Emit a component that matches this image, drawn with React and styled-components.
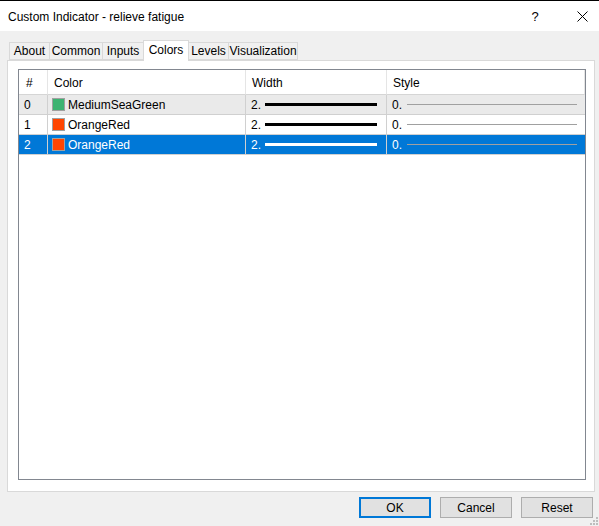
import styled, { createGlobalStyle } from 'styled-components';

const GlobalStyle = createGlobalStyle`
	html, body {
		margin: 0;
		padding: 0;
		background: #f0f0f0;
	}
	body {
		font-family: "Liberation Sans", "Noto Sans", sans-serif;
		font-size: 12px;
		color: #000;
	}
`;

const Window = styled.div`
	width: 599px;
	height: 526px;
	box-sizing: border-box;
	border-top: 1px solid #000;
	display: flex;
	flex-direction: column;
	background: #f0f0f0;
	position: relative;
	overflow: hidden;
`;

const TitleBar = styled.div`
	height: 30px;
	flex-shrink: 0;
	background: #fff;
	display: flex;
	align-items: center;
	padding-left: 8px;
	padding-top: 1px;
	box-sizing: border-box;
`;

const Title = styled.div`
	flex: 1;
	font-size: 12px;
`;

const CaptionButton = styled.div`
	width: ${props => props.w}px;
	height: 30px;
	display: flex;
	align-items: center;
	justify-content: center;
	font-size: 13px;
`;

const Body = styled.div`
	flex: 1;
	display: flex;
	flex-direction: column;
	padding: 9px 4px 9px 7px;
`;

const TabRow = styled.div`
	display: flex;
	align-items: flex-end;
	height: 20px;
	padding-left: 3px;
	position: relative;
	z-index: 1;
`;

const Tab = styled.div`
	box-sizing: border-box;
	height: ${props => props.active ? '21px' : '18px'};
	margin-bottom: ${props => props.active ? '-1px' : '0'};
	width: ${props => props.w}px;
	display: flex;
	align-items: ${props => props.active ? 'flex-start' : 'center'};
	padding-top: ${props => props.active ? '2px' : '0'};
	justify-content: center;
	background: ${props => props.active ? '#fff' : '#f0f0f0'};
	border: 1px solid #d9d9d9;
	border-bottom: ${props => props.active ? 'none' : '1px solid #d9d9d9'};
	margin-left: -1px;
	font-size: 12px;
`;

const Panel = styled.div`
	height: 432px;
	box-sizing: border-box;
	background: #fff;
	border: 1px solid #d9d9d9;
	padding: 8px 8px 11px 10px;
	display: flex;
`;

const List = styled.div`
	flex: 1;
	border: 1px solid #828790;
	background: #fff;
	display: flex;
	flex-direction: column;
`;

const Grid = styled.div`
	display: grid;
	grid-template-columns: 29px 198px 141px 1fr;
`;

const HeadCell = styled.div`
	height: 25px;
	box-sizing: border-box;
	display: flex;
	align-items: center;
	padding-left: ${props => props.pl || 6}px;
	padding-top: 1px;
	border-right: 1px solid #e5e5e5;
	border-bottom: 1px solid #d5d5d5;
	font-size: 12px;
	&:last-child {
		border-right: none;
	}
`;

const Cell = styled.div`
	height: 20px;
	box-sizing: border-box;
	display: flex;
	align-items: center;
	gap: ${props => props.gap || 3}px;
	padding-left: ${props => props.pl || 4}px;
	padding-right: ${props => props.pr || 0}px;
	background: ${props => props.selected ? '#0078d7' : props.shade ? '#eaeaea' : '#fff'};
	color: ${props => props.selected ? '#fff' : '#000'};
	border-right: 1px solid #d0d0d0;
	border-bottom: 1px solid #d0d0d0;
	font-size: 12px;
	&:nth-child(4n) {
		border-right: none;
	}
`;

const Swatch = styled.span`
	width: 11px;
	height: 11px;
	flex-shrink: 0;
	border: 1px solid #a0a0a0;
	background: ${props => props.color};
`;

const LineSample = styled.span`
	flex: 1;
	height: ${props => props.thick}px;
	background: ${props => props.color};
`;

const Footer = styled.div`
	display: flex;
	justify-content: flex-end;
	gap: 9px;
	padding-top: 5px;
	padding-right: 2px;
`;

const Button = styled.div`
	width: 72px;
	height: 21px;
	box-sizing: border-box;
	display: flex;
	align-items: center;
	justify-content: center;
	background: #e1e1e1;
	border: ${props => props.primary ? '2px solid #0078d7' : '1px solid #adadad'};
	font-size: 12px;
`;

const Grip = styled.svg`
	position: absolute;
	right: 1px;
	bottom: 1px;
`;

const tabs = [
	{ name: 'About', w: 41 },
	{ name: 'Common', w: 54 },
	{ name: 'Inputs', w: 42 },
	{ name: 'Colors', w: 46, active: true },
	{ name: 'Levels', w: 41 },
	{ name: 'Visualization', w: 70 },
];

const rows = [
	{ id: 0, name: 'MediumSeaGreen', color: '#3cb371', shade: true },
	{ id: 1, name: 'OrangeRed', color: '#ff4500' },
	{ id: 2, name: 'OrangeRed', color: '#ff4500', selected: true },
];

const App = () => {
	return (
		<>
			<GlobalStyle />
			<Window>
				<TitleBar>
					<Title>Custom Indicator - relieve fatigue</Title>
					<CaptionButton w={60}>?</CaptionButton>
					<CaptionButton w={34}>
						<svg width="11" height="11" viewBox="0 0 11 11">
							<path d="M0.5 0.5 L10.5 10.5 M10.5 0.5 L0.5 10.5" stroke="#000" strokeWidth="1" />
						</svg>
					</CaptionButton>
				</TitleBar>

				<Body>
					<TabRow>
						{tabs.map(t => (
							<Tab key={t.name} w={t.w} active={t.active}>
								{t.name}
							</Tab>
						))}
					</TabRow>

					<Panel>
						<List>
							<Grid>
								<HeadCell pl={7}>#</HeadCell>
								<HeadCell>Color</HeadCell>
								<HeadCell>Width</HeadCell>
								<HeadCell>Style</HeadCell>

								{rows.flatMap(r => [
									<Cell key={r.id + 'a'} selected={r.selected} shade={r.shade} pl={5}>{r.id}</Cell>,
									<Cell key={r.id + 'b'} selected={r.selected} shade={r.shade} pl={4} gap={3}>
										<Swatch color={r.color} />
										{r.name}
									</Cell>,
									<Cell key={r.id + 'c'} selected={r.selected} shade={r.shade} pl={5} pr={9} gap={4}>
										2.
										<LineSample thick={3} color={r.selected ? '#fff' : '#000'} />
									</Cell>,
									<Cell key={r.id + 'd'} selected={r.selected} shade={r.shade} pl={5} pr={8} gap={5}>
										0.
										<LineSample thick={1} color="#a0a0a0" />
									</Cell>,
								])}
							</Grid>
						</List>
					</Panel>

					<Footer>
						<Button primary>OK</Button>
						<Button>Cancel</Button>
						<Button>Reset</Button>
					</Footer>
				</Body>

				<Grip width="10" height="10" viewBox="0 0 10 10">
					<rect x="8" y="2" width="2" height="2" fill="#bdbdbd" />
					<rect x="5" y="5" width="2" height="2" fill="#bdbdbd" />
					<rect x="8" y="5" width="2" height="2" fill="#bdbdbd" />
					<rect x="2" y="8" width="2" height="2" fill="#bdbdbd" />
					<rect x="5" y="8" width="2" height="2" fill="#bdbdbd" />
					<rect x="8" y="8" width="2" height="2" fill="#bdbdbd" />
				</Grip>
			</Window>
		</>
	);
};

export default App;
